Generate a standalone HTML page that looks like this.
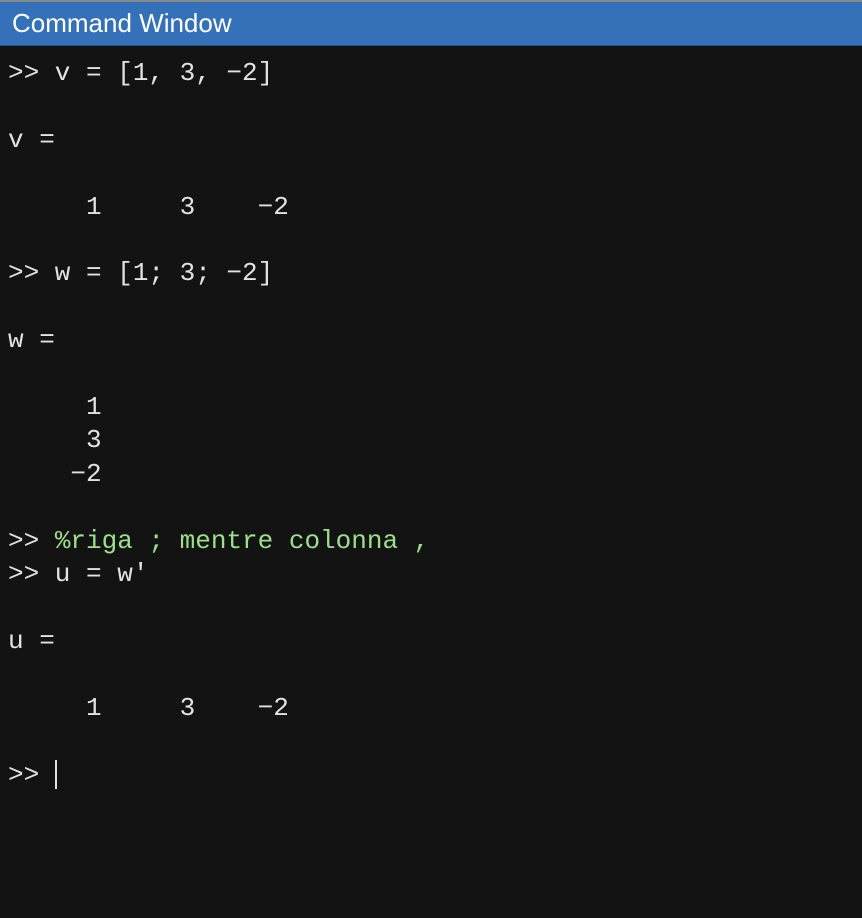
<!DOCTYPE html>
<html><head><meta charset="utf-8"><style>
html,body{margin:0;padding:0;width:862px;height:918px;overflow:hidden;background:#131313;}
.hdr{position:absolute;left:0;top:0;width:862px;height:46px;background:#3571b8;border-top:2px solid #8a8a8a;box-sizing:border-box;border-bottom:1px solid #2a4f80;}
.hdr span{position:absolute;left:12px;top:6px;font-family:"Liberation Sans",sans-serif;font-size:26px;color:#fff;}
pre{position:absolute;left:8px;top:57px;margin:0;font-family:"Liberation Mono",monospace;font-size:26px;line-height:33.4px;color:#e2e2e2;}
.g{color:#9be08b;}
.cur{position:absolute;left:55px;top:760px;width:2px;height:29px;background:#e2e2e2;}
</style></head><body>
<div class="hdr"><span>Command Window</span></div>
<pre>&gt;&gt; v = [1, 3, −2]

v =

     1     3    −2

&gt;&gt; w = [1; 3; −2]

w =

     1
     3
    −2

&gt;&gt; <span class="g">%riga ; mentre colonna ,</span>
&gt;&gt; u = w'

u =

     1     3    −2

&gt;&gt; </pre>
<div class="cur"></div>
</body></html>
